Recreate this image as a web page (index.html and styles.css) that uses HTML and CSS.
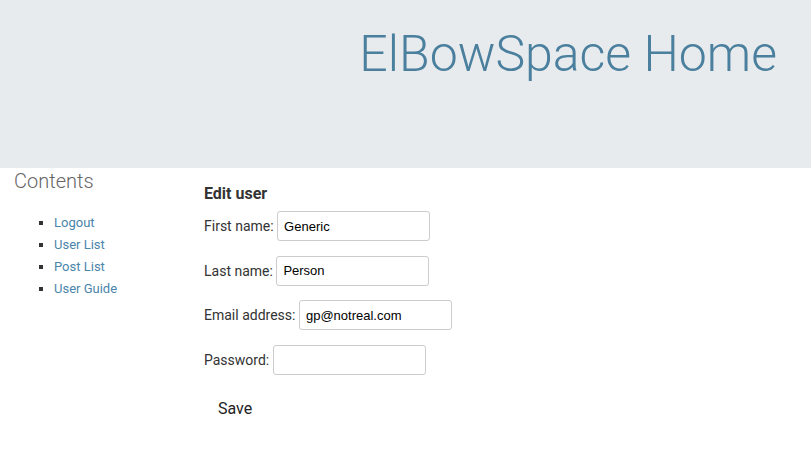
FILE: index.html
```html
<!DOCTYPE html>
<html>
<head>
<meta charset="utf-8">
<link rel="stylesheet" href="styles.css">
</head>
<body>
<header class="banner">
  <h1 class="site-title">ElBowSpace Home</h1>
</header>
<div class="page">
  <nav class="sidebar">
    <h2 class="contents-title">Contents</h2>
    <ul class="nav-list">
      <li><a href="#">Logout</a></li>
      <li><a href="#">User List</a></li>
      <li><a href="#">Post List</a></li>
      <li><a href="#">User Guide</a></li>
    </ul>
  </nav>
  <main class="main">
    <h3 class="form-title">Edit user</h3>
    <form class="user-form">
      <div class="row"><label>First name:</label><input type="text" value="Generic"></div>
      <div class="row"><label>Last name:</label><input type="text" value="Person"></div>
      <div class="row"><label>Email address:</label><input type="text" value="gp@notreal.com"></div>
      <div class="row"><label>Password:</label><input type="password" value=""></div>
      <button type="button" class="save">Save</button>
    </form>
  </main>
</div>
</body>
</html>
```

FILE: styles.css
```css
html, body {
  margin: 0;
  padding: 0;
  background: #fff;
  font-family: Roboto, "Liberation Sans", sans-serif;
  color: #333;
}
.banner {
  height: 168px;
  background: #e8ebee;
  display: flex;
  justify-content: flex-end;
  align-items: flex-start;
  padding-right: 34px;
}
.site-title {
  margin: 26px 0 0 0;
  font-size: 50px;
  font-weight: 300;
  color: #4a7f9d;
  line-height: 56px;
}
.page {
  display: flex;
}
.sidebar {
  width: 190px;
  padding-left: 14px;
  flex: none;
}
.contents-title {
  margin: 0;
  font-size: 20px;
  font-weight: 300;
  color: #666;
  line-height: 26px;
}
.nav-list {
  list-style: square;
  margin: 18px 0 0 0;
  padding-left: 40px;
  font-size: 13px;
  line-height: 22px;
}
.nav-list li::marker {
  color: #333;
}
.nav-list a {
  color: #4a85ab;
  text-decoration: none;
}
.main {
  flex: 1;
}
.form-title {
  margin: 16px 0 0 0;
  font-size: 16px;
  font-weight: 700;
  line-height: 20px;
  color: #333;
}
.user-form {
  display: flex;
  flex-direction: column;
  align-items: flex-start;
  margin-top: 7px;
  gap: 14.5px;
}
.row {
  display: flex;
  align-items: center;
  gap: 3.5px;
  font-size: 14px;
}
.row label {
  color: #333;
}
.row input {
  box-sizing: border-box;
  width: 153px;
  height: 30px;
  border: 1px solid #ccc;
  border-radius: 3px;
  padding: 0 6px;
  font-family: "Liberation Sans", Arial, sans-serif;
  font-size: 13px;
  color: #000;
  background: #fff;
}
.save {
  margin-top: 4px;
  border: none;
  background: none;
  font-family: Roboto, "Liberation Sans", sans-serif;
  font-size: 16px;
  color: #222;
  padding: 6px 14px;
}
```
